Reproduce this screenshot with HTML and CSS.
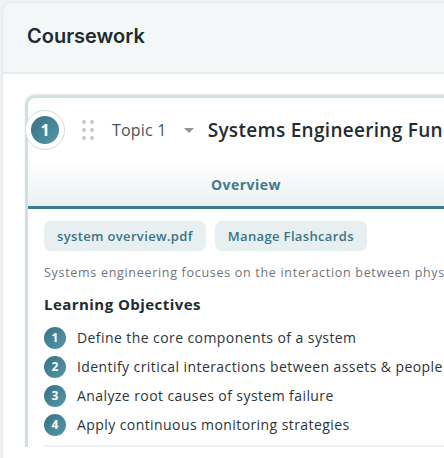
FILE: index.html
```html
<!DOCTYPE html>
<html>
<head>
<meta charset="utf-8">
<link rel="stylesheet" href="styles.css">
</head>
<body>
<div class="panel">
  <div class="panel-head"><h1 class="panel-title">Coursework</h1></div>
  <div class="panel-body">
    <div class="card">
      <div class="card-head">
        <div class="badge"><span class="badge-in">1</span></div>
        <div class="grip"><i></i><i></i><i></i><i></i><i></i><i></i></div>
        <span class="topic">Topic 1</span>
        <span class="caret"></span>
        <span class="title">Systems Engineering Fundamentals</span>
      </div>
      <div class="tabs">
        <div class="tab active">Overview</div>
      </div>
      <div class="content">
        <div class="actions">
          <span class="chip">system overview.pdf</span>
          <span class="chip">Manage Flashcards</span>
        </div>
        <p class="desc">Systems engineering focuses on the interaction between physical assets, people and processes.</p>
        <h2 class="obj-title">Learning Objectives</h2>
        <ol class="obj-list">
          <li class="obj"><span class="num">1</span>Define the core components of a system</li>
          <li class="obj"><span class="num">2</span>Identify critical interactions between assets &amp; people</li>
          <li class="obj"><span class="num">3</span>Analyze root causes of system failure</li>
          <li class="obj"><span class="num">4</span>Apply continuous monitoring strategies</li>
        </ol>
        <div class="rule"></div>
      </div>
    </div>
  </div>
</div>
</body>
</html>
```
FILE: styles.css
```css
html, body { margin: 0; padding: 0; }
body {
  background: #eef1f2;
  overflow: hidden;
  height: 458px;
  font-family: "Open Sans", "DejaVu Sans", sans-serif;
}
.panel {
  margin: 2px 0 0 2px;
  width: 700px;
  height: 470px;
  background: #fff;
  border-left: 1px solid #e4e8ea;
  border-top: 1px solid #e4e8ea;
  border-top-left-radius: 12px;
  overflow: hidden;
}
.panel-head {
  height: 71px;
  box-sizing: border-box;
  padding: 0 0 4px 24px;
  background: #f4f7f8;
  border-bottom: 2px solid #e5eaec;
  display: flex;
  align-items: center;
}
.panel-title {
  margin: 0;
  font-family: Inter, sans-serif;
  font-weight: 600;
  font-size: 20px;
  color: #1f2b30;
}
.panel-body {
  padding: 21px 0 0 22px;
}
.card {
  width: 600px;
  border-top: 3px solid #d2dfe3;
  border-left: 3px solid #d2dfe3;
  border-top-left-radius: 10px;
  box-shadow: 0 -1px 2px rgba(150,170,180,0.25);
  background: #fff;
}
.card-head {
  height: 64px;
  display: flex;
  align-items: center;
  white-space: nowrap;
}
.badge {
  margin-left: -3px;
  width: 38px;
  height: 38px;
  border-radius: 50%;
  border: 1px solid #cfdde2;
  background: #fff;
  display: flex;
  align-items: center;
  justify-content: center;
  flex: none;
}
.badge-in {
  width: 28px;
  height: 28px;
  border-radius: 50%;
  background: linear-gradient(135deg, #3a7183, #5398aa);
  color: #fff;
  font-weight: 700;
  font-size: 16px;
  display: flex;
  align-items: center;
  justify-content: center;
}
.grip {
  margin-left: 17px;
  display: grid;
  grid-template-columns: 4px 4px;
  column-gap: 4px;
  row-gap: 4px;
}
.grip i {
  width: 4px; height: 4px; border-radius: 50%;
  background: #c4c9cc;
}
.topic {
  margin-left: 18px;
  font-size: 16px;
  color: #4b5458;
  letter-spacing: 0.2px;
}
.caret {
  margin-left: 17px;
  width: 0; height: 0;
  border-left: 5px solid transparent;
  border-right: 5px solid transparent;
  border-top: 5px solid #8d9599;
}
.title {
  margin-left: 14px;
  font-size: 19px;
  font-weight: 600;
  color: #1f2d33;
  letter-spacing: 0.3px;
}
.tabs {
  display: flex;
  background: linear-gradient(#fff, #ebf0f2);
  border-bottom: 3px solid #3d7b8e;
}
.tab {
  width: 436px;
  height: 44px;
  display: flex;
  align-items: center;
  justify-content: center;
  font-size: 14px;
  font-weight: 700;
  letter-spacing: 0.5px;
  color: #3f7a8c;
}
.content {
  padding: 12px 0 0 16px;
}
.actions {
  display: flex;
  gap: 9px;
}
.chip {
  height: 30px;
  padding: 0 13px;
  display: flex;
  align-items: center;
  background: #e8eff1;
  border-radius: 7px;
  font-size: 13px;
  font-weight: 600;
  letter-spacing: 0.35px;
  color: #3a7486;
}
.desc {
  margin: 13px 0 0;
  font-size: 12.5px;
  line-height: 18px;
  letter-spacing: 0.7px;
  color: #6d7579;
  white-space: nowrap;
}
.obj-title {
  margin: 12px 0 0;
  font-size: 15px;
  line-height: 20px;
  font-weight: 700;
  letter-spacing: 0.45px;
  color: #1e2b30;
}
.obj-list {
  list-style: none;
  margin: 9px 0 0;
  padding: 0;
}
.obj {
  height: 29px;
  display: flex;
  align-items: center;
  font-size: 14px;
  letter-spacing: 0.42px;
  color: #2b3439;
  white-space: nowrap;
}
.num {
  width: 22px; height: 22px;
  border-radius: 50%;
  background: linear-gradient(135deg, #3a7183, #5398aa);
  color: #fff;
  font-size: 12px;
  font-weight: 700;
  letter-spacing: 0;
  display: flex;
  align-items: center;
  justify-content: center;
  margin-right: 11px;
  flex: none;
}
.rule {
  margin-top: 6px;
  height: 2px;
  background: #eef0f1;
}
```
